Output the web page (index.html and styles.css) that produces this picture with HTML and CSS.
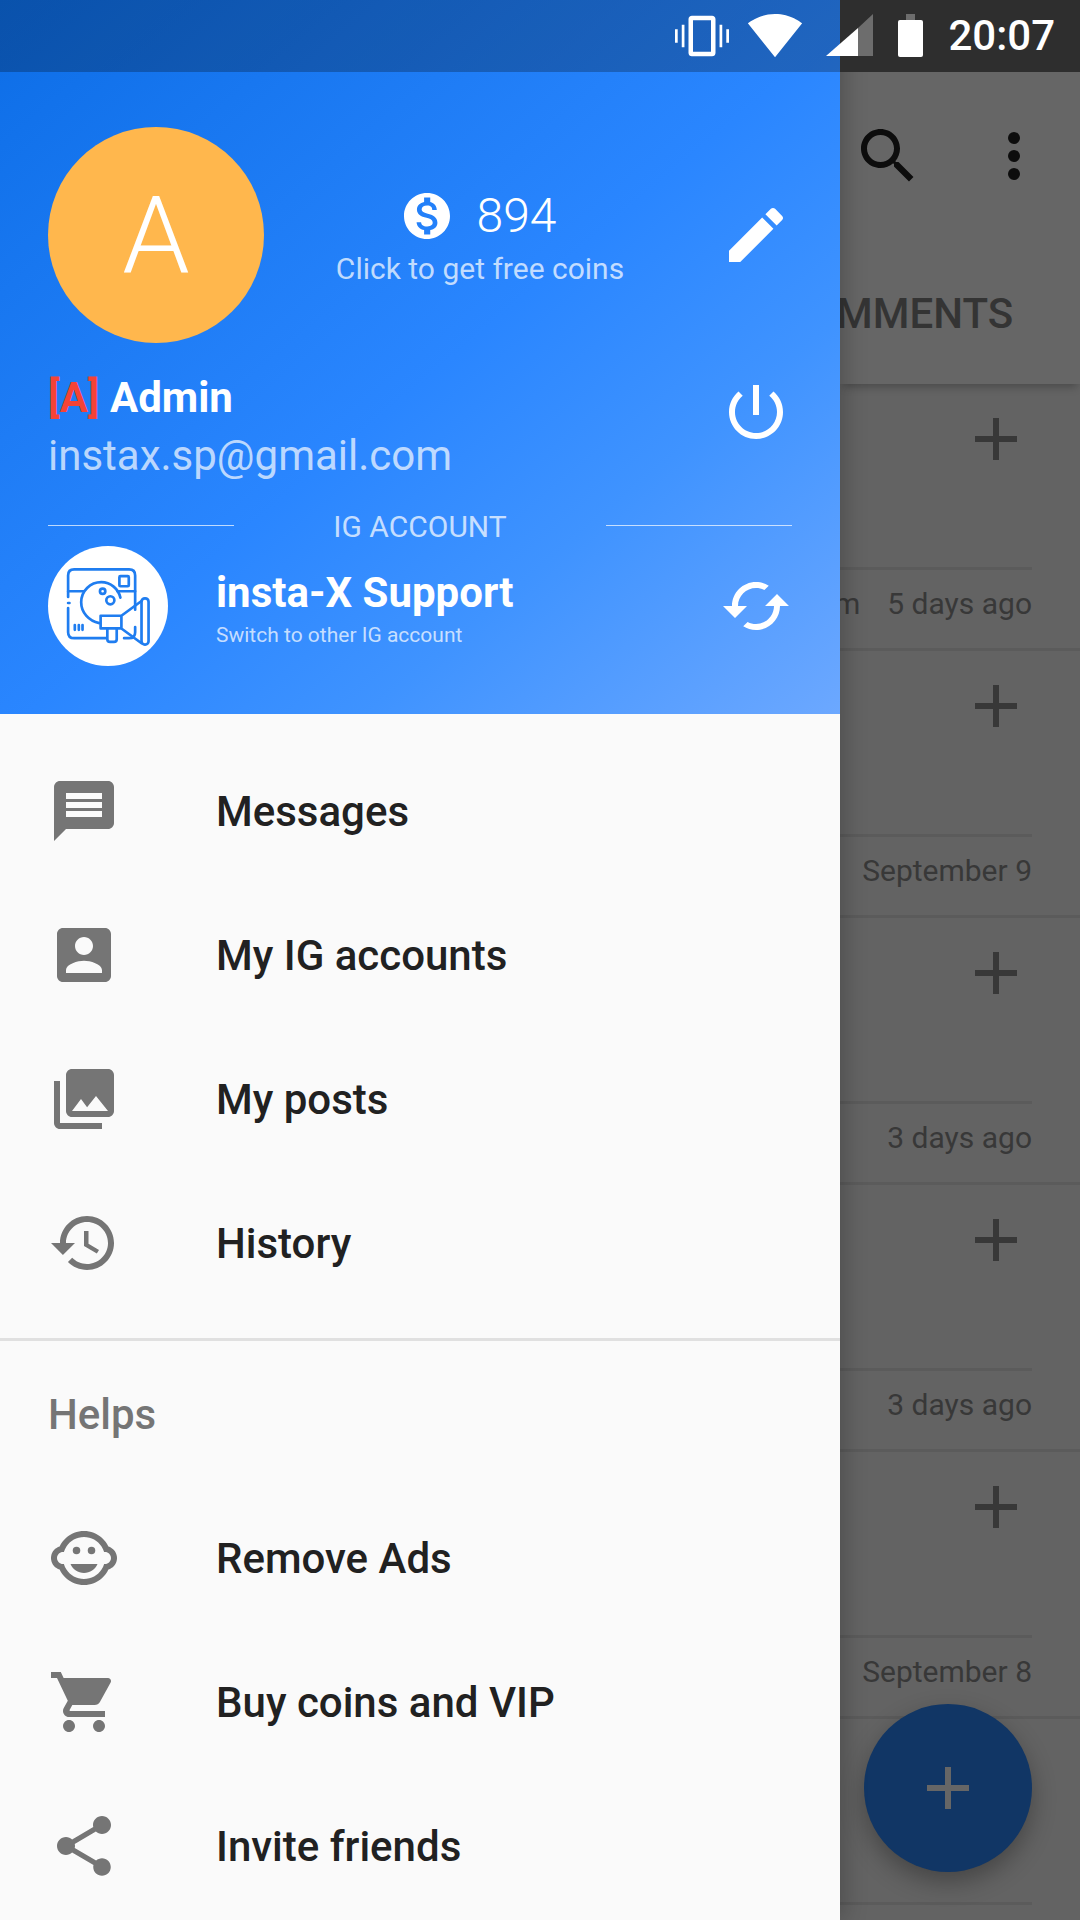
FILE: index.html
```html
<!DOCTYPE html>
<html lang="en">
<head>
<meta charset="utf-8">
<title>insta-X</title>
<link rel="stylesheet" href="styles.css">
</head>
<body>
<div class="screen">
  <main class="behind">
    <div class="toolbar">
      <svg class="icon72 tool-icon" viewBox="0 0 24 24"><path d="M15.5 14h-.79l-.28-.27C15.41 12.59 16 11.11 16 9.5 16 5.91 13.09 3 9.5 3S3 5.91 3 9.5 5.91 16 9.5 16c1.61 0 3.09-.59 4.23-1.57l.27.28v.79l5 4.99L20.49 19l-4.99-5zm-6 0C7.01 14 5 11.99 5 9.5S7.01 5 9.5 5 14 7.01 14 9.5 11.99 14 9.5 14z"/></svg>
      <svg class="icon72 tool-icon" viewBox="0 0 24 24"><circle cx="12" cy="6" r="2"/><circle cx="12" cy="12" r="2"/><circle cx="12" cy="18" r="2"/></svg>
    </div>
    <div class="tabs"><span class="tab-label">MMENTS</span></div>
    <section class="card">
      <div class="card-body"><svg class="plus" viewBox="0 0 42 42"><path d="M18 0h6v18h18v6H24v18h-6V24H0v-6h18z"/></svg></div>
      <div class="date-row"><span class="clip-text">m</span><span class="date">5 days ago</span></div>
    </section>
    <section class="card">
      <div class="card-body"><svg class="plus" viewBox="0 0 42 42"><path d="M18 0h6v18h18v6H24v18h-6V24H0v-6h18z"/></svg></div>
      <div class="date-row"><span class="date">September 9</span></div>
    </section>
    <section class="card">
      <div class="card-body"><svg class="plus" viewBox="0 0 42 42"><path d="M18 0h6v18h18v6H24v18h-6V24H0v-6h18z"/></svg></div>
      <div class="date-row"><span class="date">3 days ago</span></div>
    </section>
    <section class="card">
      <div class="card-body"><svg class="plus" viewBox="0 0 42 42"><path d="M18 0h6v18h18v6H24v18h-6V24H0v-6h18z"/></svg></div>
      <div class="date-row"><span class="date">3 days ago</span></div>
    </section>
    <section class="card">
      <div class="card-body"><svg class="plus" viewBox="0 0 42 42"><path d="M18 0h6v18h18v6H24v18h-6V24H0v-6h18z"/></svg></div>
      <div class="date-row"><span class="date">September 8</span></div>
    </section>
    <section class="card">
      <div class="card-body"></div>
    </section>
  </main>

  <button class="fab" type="button"><svg class="fab-plus" viewBox="0 0 42 42"><path d="M18 0h6v18h18v6H24v18h-6V24H0v-6h18z"/></svg></button>

  <aside class="drawer">
    <header class="head">
      <div class="head-row">
        <div class="avatar">A</div>
        <div class="coins">
          <div class="coin-line">
            <svg class="coin-icon" viewBox="2 2 20 20"><path d="M12 2C6.48 2 2 6.48 2 12s4.48 10 10 10 10-4.48 10-10S17.52 2 12 2zm1.41 16.09V20h-2.67v-1.93c-1.71-.36-3.16-1.46-3.27-3.4h1.96c.1 1.05.82 1.87 2.65 1.87 1.96 0 2.4-.98 2.4-1.59 0-.83-.44-1.61-2.67-2.14-2.48-.6-4.18-1.62-4.18-3.67 0-1.72 1.39-2.84 3.11-3.21V4h2.67v1.95c1.86.45 2.79 1.86 2.85 3.39H14.3c-.05-1.11-.64-1.87-2.22-1.87-1.5 0-2.4.68-2.4 1.64 0 .84.65 1.39 2.67 1.91s4.18 1.39 4.18 3.91c-.01 1.83-1.38 2.83-3.12 3.16z"/></svg>
            <span class="coin-count">894</span>
          </div>
          <div class="coin-hint">Click to get free coins</div>
        </div>
        <svg class="icon72 head-icon" viewBox="0 0 24 24"><path d="M3 17.25V21h3.75L17.81 9.94l-3.75-3.75L3 17.25zM20.71 7.04c.39-.39.39-1.02 0-1.41l-2.34-2.34c-.39-.39-1.02-.39-1.41 0l-1.83 1.83 3.75 3.75 1.83-1.83z"/></svg>
      </div>
      <div class="head-row identity-row">
        <div class="identity">
          <div class="name"><span class="role">[A]</span> Admin</div>
          <div class="email">instax.sp@gmail.com</div>
        </div>
        <svg class="icon72 head-icon power" viewBox="0 0 24 24"><path d="M13 3h-2v10h2V3zm4.83 2.17l-1.42 1.42C17.99 7.86 19 9.81 19 12c0 3.87-3.13 7-7 7s-7-3.13-7-7c0-2.19 1.01-4.14 2.58-5.42L6.17 5.17C4.23 6.82 3 9.26 3 12c0 4.97 4.03 9 9 9s9-4.03 9-9c0-2.74-1.23-5.18-3.17-6.83z"/></svg>
      </div>
      <div class="rule-row"><span class="rule"></span><span class="rule-label">IG ACCOUNT</span><span class="rule"></span></div>
      <div class="head-row account-row">
        <div class="account-avatar">
          <svg class="account-logo" viewBox="55 20 358 358" fill="none" stroke="#1f7df0" stroke-width="8" stroke-linecap="round" stroke-linejoin="round">
            <path d="M115 172V108q0-18 18-18h164q18 0 18 18v102M315 262v15q0 18-18 18h-15M115 205v72q0 18 18 18h96"/>
            <path d="M115 155h46M262 155h53"/>
            <rect x="268" y="110" width="28" height="30" rx="3"/>
            <path d="M208 250c-32-6-54-32-54-62 0-34 27-60 60-60 28 0 51 20 57 46"/>
            <circle cx="218" cy="155" r="8"/>
            <circle cx="241" cy="182" r="12"/>
            <path d="M212 228h62v38h-62zM274 228l60-44M274 266l60 44"/>
            <rect x="334" y="176" width="21" height="138" rx="10"/>
            <path d="M232 266v32q0 8 8 8h12q8 0 8-8v-32"/>
            <path d="M135 256v14M147 256v14M158 256v14"/>
            <path d="M115 190h4"/>
          </svg>
        </div>
        <div class="account-text">
          <div class="account-name">insta-X Support</div>
          <div class="account-hint">Switch to other IG account</div>
        </div>
        <svg class="icon72 head-icon" viewBox="0 0 24 24"><path d="M19 8l-4 4h3c0 3.31-2.69 6-6 6-1.01 0-1.97-.25-2.8-.7l-1.46 1.46C8.97 19.54 10.43 20 12 20c4.42 0 8-3.58 8-8h3l-4-4zM6 12c0-3.31 2.69-6 6-6 1.01 0 1.97.25 2.8.7l1.46-1.46C15.03 4.46 13.57 4 12 4c-4.42 0-8 3.58-8 8H1l4 4 4-4H6z"/></svg>
      </div>
    </header>

    <nav class="menu">
      <ul class="menu-group first">
        <li class="menu-item">
          <svg class="icon72 menu-icon" viewBox="0 0 24 24"><path d="M20 2H4c-1.1 0-1.99.9-1.99 2L2 22l4-4h14c1.1 0 2-.9 2-2V4c0-1.1-.9-2-2-2zm-2 12H6v-2h12v2zm0-3H6V9h12v2zm0-3H6V6h12v2z"/></svg>
          <span>Messages</span>
        </li>
        <li class="menu-item">
          <svg class="icon72 menu-icon" viewBox="0 0 24 24"><path d="M3 5v14c0 1.1.89 2 2 2h14c1.1 0 2-.9 2-2V5c0-1.1-.9-2-2-2H5c-1.11 0-2 .9-2 2zm12 4c0 1.66-1.34 3-3 3s-3-1.34-3-3 1.34-3 3-3 3 1.34 3 3zm-9 8c0-2 4-3.1 6-3.1s6 1.1 6 3.1v1H6v-1z"/></svg>
          <span>My IG accounts</span>
        </li>
        <li class="menu-item">
          <svg class="icon72 menu-icon" viewBox="0 0 24 24"><path d="M22 16V4c0-1.1-.9-2-2-2H8c-1.1 0-2 .9-2 2v12c0 1.1.9 2 2 2h12c1.1 0 2-.9 2-2zm-11-4l2.03 2.71L16 11l4 5H8l3-4zM2 6v14c0 1.1.9 2 2 2h14v-2H4V6H2z"/></svg>
          <span>My posts</span>
        </li>
        <li class="menu-item">
          <svg class="icon72 menu-icon" viewBox="0 0 24 24"><path d="M13 3c-4.97 0-9 4.03-9 9H1l3.89 3.89.07.14L9 12H6c0-3.87 3.13-7 7-7s7 3.13 7 7-3.13 7-7 7c-1.93 0-3.68-.79-4.94-2.06l-1.42 1.42C8.27 19.99 10.51 21 13 21c4.97 0 9-4.03 9-9s-4.03-9-9-9zm-1 5v5l4.28 2.54.72-1.21-3.5-2.08V8H12z"/></svg>
          <span>History</span>
        </li>
      </ul>
      <div class="menu-title">Helps</div>
      <ul class="menu-group">
        <li class="menu-item">
          <svg class="icon72 menu-icon" viewBox="0 0 24 24"><circle cx="9.5" cy="9.5" r="1.25"/><circle cx="14.5" cy="9.5" r="1.25"/><path d="M22.94 12.66c.04-.21.06-.43.06-.66s-.02-.45-.06-.66c-.25-1.51-1.36-2.74-2.81-3.17-.53-1.12-1.28-2.1-2.19-2.91C16.36 3.85 14.28 3 12 3s-4.36.85-5.94 2.26c-.92.81-1.67 1.8-2.19 2.91-1.45.43-2.56 1.65-2.81 3.17-.04.21-.06.43-.06.66s.02.45.06.66c.25 1.51 1.36 2.74 2.81 3.17.52 1.11 1.27 2.09 2.17 2.89C7.62 20.14 9.71 21 12 21s4.38-.86 5.97-2.28c.9-.8 1.65-1.79 2.17-2.89 1.44-.43 2.55-1.65 2.8-3.17zM19 14c-.1 0-.19-.02-.29-.03-.2.67-.49 1.29-.86 1.86C16.6 17.74 14.45 19 12 19s-4.6-1.26-5.85-3.17c-.37-.57-.66-1.19-.86-1.86-.1.01-.19.03-.29.03-1.1 0-2-.9-2-2s.9-2 2-2c.1 0 .19.02.29.03.2-.67.49-1.29.86-1.86C7.4 6.26 9.55 5 12 5s4.6 1.26 5.85 3.17c.37.57.66 1.19.86 1.86.1-.01.19-.03.29-.03 1.1 0 2 .9 2 2s-.9 2-2 2zM7.5 14c.76 1.77 2.49 3 4.5 3s3.74-1.23 4.5-3h-9z"/></svg>
          <span>Remove Ads</span>
        </li>
        <li class="menu-item">
          <svg class="icon72 menu-icon" viewBox="0 0 24 24"><path d="M7 18c-1.1 0-1.99.9-1.99 2S5.9 22 7 22s2-.9 2-2-.9-2-2-2zM1 2v2h2l3.6 7.59-1.35 2.45c-.16.28-.25.61-.25.96 0 1.1.9 2 2 2h12v-2H7.42c-.14 0-.25-.11-.25-.25l.03-.12.9-1.63h7.45c.75 0 1.41-.41 1.75-1.03l3.58-6.49c.08-.14.12-.31.12-.48 0-.55-.45-1-1-1H5.21l-.94-2H1zm16 16c-1.1 0-1.99.9-1.99 2s.89 2 1.99 2 2-.9 2-2-.9-2-2-2z"/></svg>
          <span>Buy coins and VIP</span>
        </li>
        <li class="menu-item">
          <svg class="icon72 menu-icon" viewBox="0 0 24 24"><path d="M18 16.08c-.76 0-1.44.3-1.96.77L8.91 12.7c.05-.23.09-.46.09-.7s-.04-.47-.09-.7l7.05-4.11c.54.5 1.25.81 2.04.81 1.66 0 3-1.34 3-3s-1.34-3-3-3-3 1.34-3 3c0 .24.04.47.09.7L8.04 9.81C7.5 9.31 6.79 9 6 9c-1.66 0-3 1.34-3 3s1.34 3 3 3c.79 0 1.5-.31 2.04-.81l7.12 4.16c-.05.21-.08.43-.08.65 0 1.61 1.31 2.92 2.92 2.92 1.61 0 2.92-1.31 2.92-2.92s-1.31-2.92-2.92-2.92z"/></svg>
          <span>Invite friends</span>
        </li>
      </ul>
    </nav>
  </aside>

  <div class="statusbar">
    <svg class="st-vibrate" viewBox="0 0 24 24"><path d="M0 15h1.2V9H0v6zm3 2h1.2V7H3v10zm19.8-8v6H24V9h-1.2zm-3 8H21V7h-1.2v10zM16.5 3h-9C6.67 3 6 3.67 6 4.5v15c0 .83.67 1.5 1.5 1.5h9c.83 0 1.5-.67 1.5-1.5v-15c0-.83-.67-1.5-1.5-1.5zM16 19H8V5h8v14z"/></svg>
    <svg class="st-wifi" viewBox="0 0 24 24"><path d="M12.01 21.49L23.64 7c-.45-.34-4.93-4-11.64-4C5.28 3 .81 6.66.36 7l11.65 14.49z"/></svg>
    <svg class="st-signal" viewBox="0 0 47 42"><path class="st-dim" d="M47 0v42H32V14z"/><path d="M32 14v28H0z"/></svg>
    <svg class="st-battery" viewBox="0 0 25 43"><path class="st-dim" d="M8 0h9v6H8z"/><path d="M2 6h21q2 0 2 2v33q0 2-2 2H2q-2 0-2-2V8q0-2 2-2z"/></svg>
    <span class="st-time">20:07</span>
  </div>
</div>
</body>
</html>
```

FILE: styles.css
```css
* { box-sizing: border-box; }
html, body { margin: 0; padding: 0; }
body { font-family: Roboto, "Noto Sans", sans-serif; }
ul { list-style: none; margin: 0; padding: 0; }

.screen {
  position: relative;
  width: 1080px;
  height: 1920px;
  overflow: hidden;
  background: #666;
}

.icon72 { width: 72px; height: 72px; flex: none; display: block; }

/* dimmed page behind the drawer */
.behind { padding: 72px 0 0 840px; }
.toolbar {
  height: 168px;
  display: flex;
  justify-content: flex-end;
  align-items: center;
  gap: 54px;
  padding: 0 30px 0 0;
}
.tool-icon { fill: #0d0d0d; }
.tabs {
  height: 144px;
  display: flex;
  align-items: center;
  background: #666;
  box-shadow: 0 6px 8px -3px rgba(0, 0, 0, .25);
  position: relative;
  padding-top: 2px;
}
.tab-label {
  font-size: 42px;
  font-weight: 500;
  color: #343434;
  margin-left: -4px;
}
.card {
  height: 267px;
  border-bottom: 3px solid #5b5b5b;
  display: flex;
  flex-direction: column;
  padding-right: 48px;
  background: #636363;
}
.card-body {
  height: 186px;
  border-bottom: 3px solid #5b5b5b;
  display: flex;
  justify-content: flex-end;
  align-items: flex-start;
  padding: 34px 15px 0 0;
}
.plus { width: 42px; height: 42px; fill: #383838; display: block; }
.date-row {
  flex: 1;
  display: flex;
  align-items: center;
  font-size: 30px;
  color: #383838;
  padding-bottom: 11px;
}
.clip-text { font-size: 30px; margin-left: -6px; }
.date { margin-left: auto; }

.fab {
  position: absolute;
  left: 864px;
  top: 1704px;
  width: 168px;
  height: 168px;
  border: 0;
  padding: 0;
  border-radius: 50%;
  background: #113665;
  box-shadow: 0 10px 24px rgba(0, 0, 0, .3);
  display: flex;
  align-items: center;
  justify-content: center;
}
.fab-plus { width: 42px; height: 42px; fill: #666; }

/* drawer */
.drawer {
  position: absolute;
  left: 0;
  top: 0;
  width: 840px;
  height: 1920px;
  background: #fafafa;
  box-shadow: 4px 0 22px rgba(0, 0, 0, .22);
}
.head {
  height: 714px;
  padding: 127px 48px 0;
  background: linear-gradient(140deg, #0c6de6 0%, #2a86ff 52%, #3f93ff 72%, #6ca8ff 100%);
  color: #fff;
}
.head-row { display: flex; align-items: center; }
.head-icon { fill: #fff; margin-left: auto; }
.avatar {
  width: 216px;
  height: 216px;
  flex: none;
  border-radius: 50%;
  background: #ffb74d;
  display: flex;
  align-items: center;
  justify-content: center;
  font-size: 108px;
  font-weight: 300;
  line-height: 1;
}
.coins { width: 432px; text-align: center; }
.coin-line {
  display: flex;
  align-items: center;
  justify-content: center;
  gap: 27px;
  height: 60px;
  margin-top: 4px;
}
.coin-icon { width: 46px; height: 46px; fill: #fff; flex: none; }
.coin-count { font-size: 48px; font-weight: 300; }
.coin-hint { font-size: 30px; font-weight: 400; color: rgba(255, 255, 255, .72); line-height: 40px; margin-top: 3px; }

.identity-row { margin-top: 27px; align-items: flex-start; }
.name { font-size: 42px; font-weight: 700; line-height: 56px; }
.role { color: #f44336; }
.email { font-size: 42px; font-weight: 400; line-height: 59px; color: rgba(255, 255, 255, .7); }
.power { margin-top: 6px; }

.rule-row {
  margin-top: 20px;
  height: 40px;
  display: flex;
  align-items: center;
  justify-content: space-between;
}
.rule { width: 186px; height: 1px; background: rgba(255, 255, 255, .7); }
.rule-label { font-size: 30px; font-weight: 400; color: rgba(255, 255, 255, .72); position: relative; top: 1px; }

.account-row { margin-top: 1px; }
.account-avatar {
  width: 120px;
  height: 120px;
  flex: none;
  border-radius: 50%;
  background: #fff;
}
.account-logo { width: 120px; height: 120px; display: block; }
.account-text { margin-left: 48px; padding-top: 2px; }
.account-name { font-size: 42px; font-weight: 700; line-height: 56px; }
.account-hint { font-size: 21px; font-weight: 400; color: rgba(255, 255, 255, .72); line-height: 28px; }

.menu-group.first {
  padding: 25px 0 23px;
  border-bottom: 3px solid #e0e0e0;
}
.menu-item {
  height: 144px;
  display: flex;
  align-items: center;
  padding-left: 48px;
  font-size: 42px;
  font-weight: 500;
  color: #212121;
}
.menu-icon { fill: #757575; margin-right: 96px; }
.menu-title {
  height: 145px;
  display: flex;
  align-items: center;
  padding: 2px 0 0 48px;
  font-size: 42px;
  font-weight: 500;
  color: #757575;
}

/* system status bar */
.statusbar {
  position: absolute;
  left: 0;
  top: 0;
  width: 1080px;
  height: 72px;
  display: flex;
  justify-content: flex-end;
  align-items: flex-start;
  padding-right: 25px;
  background: linear-gradient(to right, rgba(0, 0, 0, .25) 840px, #2e2e2e 840px);
  fill: #fff;
  color: #fff;
}
.st-vibrate { width: 54px; height: 54px; margin-top: 9px; }
.st-wifi { width: 56px; height: 56px; margin: 7px 0 0 18px; }
.st-signal { width: 47px; height: 42px; margin: 14px 0 0 23px; }
.st-dim { fill: rgba(255, 255, 255, .3); }
.st-battery { width: 25px; height: 43px; margin: 14px 0 0 25px; }
.st-time { font-size: 42px; font-weight: 500; line-height: 72px; margin-left: 25px; }
```
